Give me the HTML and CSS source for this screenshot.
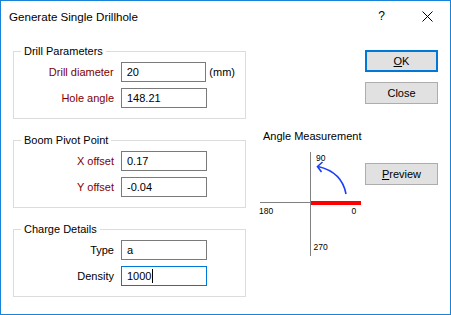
FILE: index.html
```html
<!DOCTYPE html>
<html>
    <head>
        <meta charset="UTF-8">
        <meta name="viewport" content="width=device-width, initial-scale=1.0">
        <link rel="stylesheet" href="styles.css">
    </head>
    <body>
        <div class="window">
            <div class="titlebar">
                <span class="caption">Generate Single Drillhole</span>
                <span class="help">?</span>
                <span class="close-x">
                    <svg width="11" height="11" viewBox="0 0 11 11"><path d="M0.5 0.5L10.5 10.5M10.5 0.5L0.5 10.5" stroke="#000" stroke-width="1"/></svg>
                </span>
            </div>

            <div class="content">
                <div class="left">
                    <fieldset class="group">
                        <legend>Drill Parameters</legend>
                        <div class="row">
                            <span class="lbl red">Drill diameter</span>
                            <div class="field">20</div>
                            <span class="unit">(mm)</span>
                        </div>
                        <div class="row">
                            <span class="lbl red">Hole angle</span>
                            <div class="field">148.21</div>
                        </div>
                    </fieldset>

                    <fieldset class="group">
                        <legend>Boom Pivot Point</legend>
                        <div class="row">
                            <span class="lbl red">X offset</span>
                            <div class="field">0.17</div>
                        </div>
                        <div class="row">
                            <span class="lbl red">Y offset</span>
                            <div class="field">-0.04</div>
                        </div>
                    </fieldset>

                    <fieldset class="group">
                        <legend>Charge Details</legend>
                        <div class="row">
                            <span class="lbl">Type</span>
                            <div class="field">a</div>
                        </div>
                        <div class="row">
                            <span class="lbl">Density</span>
                            <div class="field focus">1000<span class="caret"></span></div>
                        </div>
                    </fieldset>
                </div>

                <div class="angle">
                    <div class="angle-title">Angle Measurement</div>
                    <svg class="dial" width="110" height="112" viewBox="0 0 110 112">
                        <line x1="55.5" y1="7" x2="55.5" y2="111" stroke="#808080" stroke-width="1"/>
                        <line x1="5" y1="57.5" x2="106" y2="57.5" stroke="#808080" stroke-width="1"/>
                        <rect x="56" y="56" width="50" height="4" fill="#ff0000"/>
                        <path d="M91 49 Q87 27 63 21.5" fill="none" stroke="#1c3cff" stroke-width="1.6"/>
                        <path d="M67.5 17 L62.5 21.5 L66.5 27" fill="none" stroke="#1c3cff" stroke-width="1.6"/>
                        <text x="61" y="16" class="tick">90</text>
                        <text x="4" y="68.5" class="tick">180</text>
                        <text x="96.5" y="68.5" class="tick">0</text>
                        <text x="58.5" y="105" class="tick">270</text>
                    </svg>
                </div>

                <div class="buttons">
                    <div class="btn default"><u>O</u>K</div>
                    <div class="btn">Close</div>
                    <div class="btn preview"><u>P</u>review</div>
                </div>
            </div>
        </div>
    </body>
</html>
```

FILE: styles.css
```css
body{
    margin: 0;
    font-family: "Liberation Sans", Arial, sans-serif;
    font-size: 11px;
    color: #000000;
}
.window{
    width: 451px;
    height: 315px;
    box-sizing: border-box;
    border: 1px solid #1883d7;
    background-color: white;
}
.titlebar{
    display: flex;
    align-items: center;
    height: 30px;
    padding-left: 8px;
}
.caption{
    font-size: 11.6px;
    flex: 1;
}
.help{
    font-size: 12px;
    margin-right: 37px;
}
.close-x{
    display: flex;
    margin-right: 17px;
}
.content{
    display: flex;
    padding-top: 13px;
    padding-left: 12px;
}
.left{
    width: 233px;
    display: flex;
    flex-direction: column;
    gap: 14px;
}
.group{
    margin: 0;
    min-width: 0;
    border: 1px solid #dcdcdc;
    padding: 4px 10px 10px 7px;
}
.group legend{
    padding: 0 3px;
    line-height: 14px;
}
.row{
    display: flex;
    align-items: center;
}
.row + .row{
    margin-top: 6px;
}
.lbl{
    width: 93px;
    margin-right: 7px;
    text-align: right;
}
.red{
    color: #800000;
}
.field{
    display: flex;
    align-items: center;
    box-sizing: border-box;
    width: 86px;
    height: 20px;
    border: 1px solid #7a7a7a;
    padding-left: 5px;
}
.field.focus{
    border-color: #0078d7;
}
.caret{
    display: inline-block;
    width: 1px;
    height: 14px;
    margin-left: 1px;
    background-color: #000000;
}
.unit{
    margin-left: 3px;
}
.angle{
    width: 110px;
    margin-left: 9px;
    margin-top: 85px;
}
.angle-title{
    padding-left: 8px;
    line-height: 14px;
}
.dial{
    display: block;
    margin-top: 2px;
}
.tick{
    font-family: "Liberation Sans", Arial, sans-serif;
    font-size: 8.5px;
    fill: #000000;
}
.buttons{
    display: flex;
    flex-direction: column;
    width: 73px;
    margin-top: 6px;
}
.btn{
    display: flex;
    align-items: center;
    justify-content: center;
    box-sizing: border-box;
    height: 22px;
    background-color: #e1e1e1;
    border: 1px solid #adadad;
}
.btn + .btn{
    margin-top: 10px;
}
.btn.default{
    border: 2px solid #0078d7;
}
.btn.preview{
    margin-top: 59px;
}
```
